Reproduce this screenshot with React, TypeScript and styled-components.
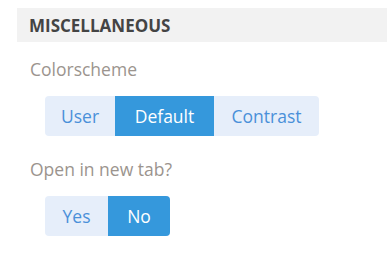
import React, { useState } from "react";
import styled, { createGlobalStyle } from "styled-components";

const Global = createGlobalStyle`
  html, body { margin: 0; padding: 0; background: #ffffff; }
  body { font-family: "Open Sans", "Noto Sans", sans-serif; }
`;

const Page = styled.div`
  padding: 8px 0 0 17px;
`;

const SectionHeader = styled.div`
  height: 34px;
  background: #f2f2f2;
  display: flex;
  align-items: center;
  padding-left: 12px;
  font-size: 17px;
  font-weight: 700;
  color: #444444;
`;

const Body = styled.div`
  display: flex;
  flex-direction: column;
  padding-left: 13px;
`;

const Label = styled.div<{ $top: number }>`
  margin-top: ${(p) => p.$top}px;
  font-size: 17.5px;
  line-height: 24px;
  color: #9b948e;
`;

const Group = styled.div`
  display: flex;
  align-self: flex-start;
  margin: 15px 0 0 15px;
  border-radius: 4px;
  overflow: hidden;
  background: #e6eefa;
`;

const Segment = styled.button<{ $active: boolean; $w: number }>`
  all: unset;
  box-sizing: border-box;
  width: ${(p) => p.$w}px;
  height: 40px;
  display: flex;
  align-items: center;
  justify-content: center;
  font-family: "Open Sans", "Noto Sans", sans-serif;
  font-size: 17.5px;
  cursor: pointer;
  background: ${(p) => (p.$active ? "#3598dc" : "transparent")};
  color: ${(p) => (p.$active ? "#ffffff" : "#4a90d9")};
`;

type Opt = { label: string; w: number };

function Segmented({ options, value, onChange }: { options: Opt[]; value: string; onChange: (v: string) => void }) {
  return (
    <Group>
      {options.map((o) => (
        <Segment key={o.label} $w={o.w} $active={o.label === value} onClick={() => onChange(o.label)}>
          {o.label}
        </Segment>
      ))}
    </Group>
  );
}

export default function App() {
  const [scheme, setScheme] = useState("Default");
  const [tab, setTab] = useState("No");
  return (
    <Page>
      <Global />
      <SectionHeader>MISCELLANEOUS</SectionHeader>
      <Body>
        <Label $top={15}>Colorscheme</Label>
        <Segmented
          options={[
            { label: "User", w: 70 },
            { label: "Default", w: 99 },
            { label: "Contrast", w: 105 },
          ]}
          value={scheme}
          onChange={setScheme}
        />
        <Label $top={21}>Open in new tab?</Label>
        <Segmented
          options={[
            { label: "Yes", w: 63 },
            { label: "No", w: 62 },
          ]}
          value={tab}
          onChange={setTab}
        />
      </Body>
    </Page>
  );
}
